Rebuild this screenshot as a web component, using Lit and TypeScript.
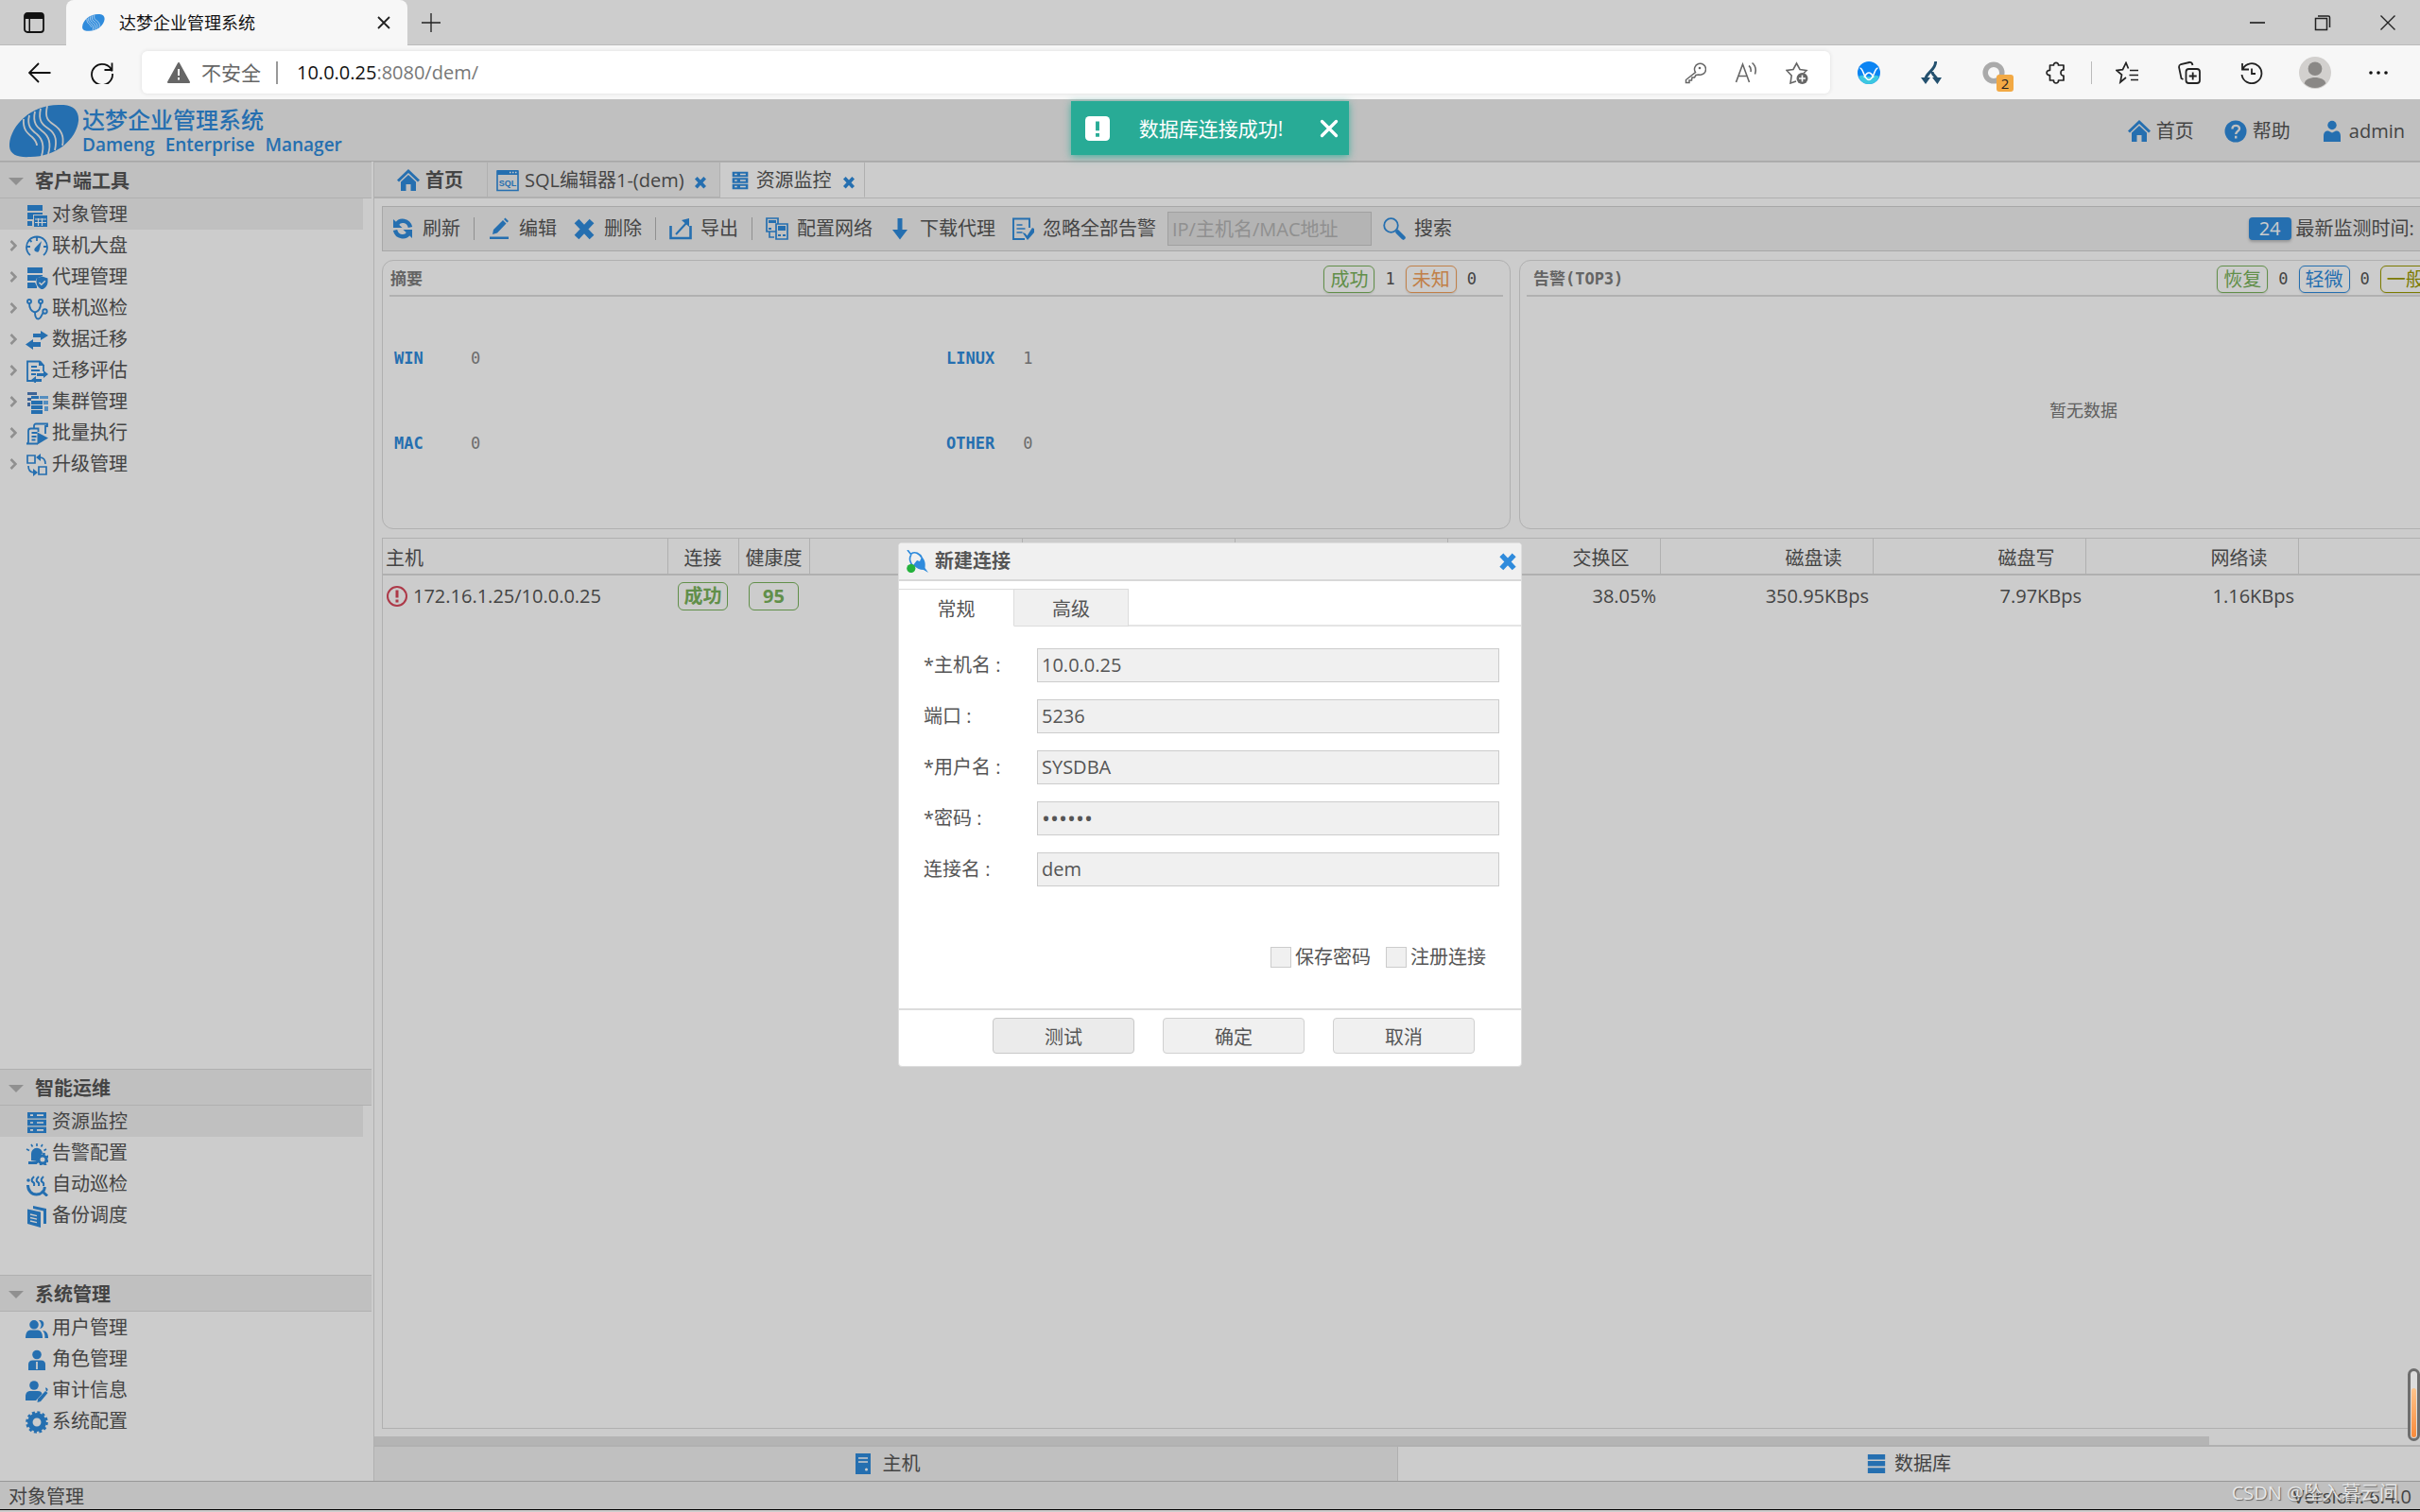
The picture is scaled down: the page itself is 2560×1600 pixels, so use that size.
import { LitElement, html, svg, css, nothing, SVGTemplateResult } from "lit";
import { customElement } from "lit/decorators.js";
import { classMap } from "lit/directives/class-map.js";

const B = "#2f8bdc";

const art: Record<string, SVGTemplateResult> = {
  object: svg`<path fill="${B}" d="M2 1h16v6H2zM2 9h16v2H8v5H2zM2 18h5v5H2z"/><path fill="${B}" d="M9 12h14v12H9z"/><path stroke="#fff" stroke-width="1.2" d="M10 16h12M10 19.500h12M13.500 15v8M17.500 15v8"/>`,
  gauge: svg`<path fill="none" stroke="${B}" stroke-width="1.800" d="M5 21A11 11 0 1 1 19 21M12 2v4M1.500 12h3.500M19 12h3.500M4.500 5l2 2"/><path fill="${B}" d="M17 6l-2.500 10a2.600 2.600 0 1 1-4.500-2.500z"/>`,
  agent: svg`<path fill="${B}" d="M2 1h16v6H2zM2 9h16v1l-7 3v2H2zM2 17h8l2 4v2H2z"/><path fill="${B}" d="M17.500 10.500l6 2v4c0 4-3 6.500-6 8-3-1.500-6-4-6-8v-4z"/><path fill="none" stroke="#fff" stroke-width="1.500" d="M14.500 17l2.300 2.300 4-4"/>`,
  steth: svg`<g fill="none" stroke="${B}" stroke-width="1.900"><circle cx="4" cy="4" r="2"/><circle cx="16" cy="4" r="2"/><circle cx="20.500" cy="14.500" r="2.200"/><path d="M4 6c0 5 2 8.500 6 9.500 4-1 6-4.500 6-9.500M10 15.500c0 4 1 7 3.500 7s3-3 5-6.500"/></g>`,
  migrate: svg`<path fill="${B}" d="M8 5h8V2l8 5-8 5V9H8zM16 14H8v-3l-8 5.500L8 22v-3h8z"/>`,
  evaluate: svg`<path fill="none" stroke="${B}" stroke-width="1.800" d="M8 22H2V1.500h13l4 4V12M6 7h6M6 11h9M6 15h5"/><path fill="${B}" d="M14 1h2l4 5h-6zM12 14h7v-3l5 4-5 4v-2h-7zM17 20h-6v-3l-5 4 5 4v-2h6z"/>`,
  cluster: svg`<path fill="#4d7dbd" d="M2 1h10v3H2zM2 7h4v3H2zM2 12h3v4H2z"/><path fill="#6bb2ef" d="M15 5h9v3h-9zM19 10h5v4h-5zM20 16h4v5h-4z"/><path fill="${B}" d="M6 5h8v3H6zM6 10h12v4H6zM6 15h12v4H6zM6 20h12v4H6z"/>`,
  batch: svg`<path fill="none" stroke="${B}" stroke-width="1.800" d="M9 6V3.500A2 2 0 0 1 11 1.500h12V4h-2v8M3 20V9a2.500 2.500 0 0 1 2.500-2.500h8V10M1 22.500h12M3 20c0 1.500-1 2.500-2 2.500M6.500 11h6M6.500 15h5M6.500 18.500h4"/><path fill="${B}" d="M12.500 10.500L24 16.500l-11.500 7z"/>`,
  upgrade: svg`<path fill="none" stroke="${B}" stroke-width="1.700" d="M2 2h8v8H2zM14 14h8v8h-8zM15 4c4 0 6 2 6 7M3 13c0 5 2 7 6 7"/><path fill="${B}" d="M16 0v8l-5-4zM8 16v8l5-4z"/>`,
  server: svg`<path fill="${B}" d="M2 1h20v6.500H2zM2 8.700h20v6.500H2zM2 16.500h20V23H2z"/><path stroke="#fff" stroke-width="1.700" d="M5 4.200h3M12 4.200h7M5 12h3M12 12h7M5 19.800h3M12 19.800h7"/>`,
  alarm: svg`<path fill="${B}" d="M6 19V12a6 6 0 0 1 12-.5L13 16v4zM3 20h9v3H3z"/><path stroke="${B}" stroke-width="1.600" d="M12 1v3M6 2l1.500 2.500M18 2l-1.500 2.500M1 7l3 1.500M22 7l-2.500 1.500"/><circle cx="18" cy="18" r="4" fill="none" stroke="${B}" stroke-width="3"/><path stroke="${B}" stroke-width="2.500" stroke-dasharray="2.500 2.200" d="M12 18a6 6 0 1 1 12 0 6 6 0 1 1-12 0" fill="none"/>`,
  patrol: svg`<path fill="none" stroke="${B}" stroke-width="2" d="M9 3c-3 3-3 5-1 6s1 3 1 4M14 3c-3 3-3 5-1 6s1 3 1 4M19 3c-3 3-3 5-1 6s1 3 1 4"/><path fill="none" stroke="${B}" stroke-width="3" d="M2.500 12c0 6 4 10 9 10 5.500 0 8.500-4 9-8M17 18l6 5.500"/><circle cx="3" cy="7" r="1.800" fill="${B}"/>`,
  backup: svg`<path fill="${B}" d="M8 1l14 3v16h-3V6.500L8 4zM2 4.500l14 3V24L2 20z"/><path stroke="#fff" stroke-width="1.300" d="M5 10l7 1.700M5 13.500l7 1.700M5 17l7 1.700"/>`,
  users: svg`<path fill="${B}" d="M9 3a4.800 4.800 0 1 1 0 9.600A4.800 4.800 0 0 1 9 3zM0 22c0-6 2-8.500 6-8.500h6c4 0 6 2.500 6 8.500zM14 3c7-1 7 8 1 9 2.500-3 2-6-1-9zM18 14c4 0 6 3 6 8h-3.500c0-4-.5-6-2.500-8z"/>`,
  role: svg`<circle cx="12" cy="6.500" r="4.800" fill="${B}"/><path fill="${B}" d="M3 23v-6c0-3 1.500-4.500 4.500-4.500h9c3 0 4.500 1.500 4.500 4.500v6z"/><path stroke="#fff" stroke-width="1.800" d="M12 14v8"/>`,
  audit: svg`<circle cx="9" cy="6" r="4.800" fill="${B}"/><path fill="${B}" d="M0 22v-4c0-4 2-6 5-6h8c3 0 4 1 4.500 3L11 22zM21 12l2.500 2L16 23l-3.500 1 .5-3.500zM21 8.500a2 2 0 1 1 1 4z"/>`,
  gear: svg`<circle cx="12" cy="12" r="7.200" fill="none" stroke="${B}" stroke-width="5.500"/><circle cx="12" cy="12" r="10.500" fill="none" stroke="${B}" stroke-width="2.600" stroke-dasharray="3 2.500"/>`,
  home: svg`<path fill="${B}" d="M12 0l12 11.500-2 2L12 4 2 13.500l-2-2zM12 6l8 7.500V23h-5.500v-7h-5v7H4v-9.500z"/>`,
  help: svg`<circle cx="12" cy="12" r="11.500" fill="${B}"/><path fill="none" stroke="#f0f0f0" stroke-width="2.400" d="M8.500 9.500c0-5 7.500-4.500 7.500-.5 0 2.800-3.800 3-3.800 6M12.200 16.800v2.600"/>`,
  user: svg`<circle cx="12" cy="5.500" r="4.700" fill="${B}"/><path fill="${B}" d="M3 23v-6c0-3.500 1.500-5.500 5-5.500l4 2 4-2c3.500 0 5 2 5 5.500v6z"/>`,
  sql: svg`<path fill="none" stroke="${B}" stroke-width="1.600" d="M1 2h22v20.500H1z"/><path fill="${B}" d="M1 1h22v5H1z"/><path stroke="#fff" stroke-width="1.400" stroke-dasharray="1.500 1.500" d="M14 3.500h8"/><text x="12" y="17.500" text-anchor="middle" font-family="Liberation Sans" font-weight="700" font-size="9" fill="${B}">SQL</text>`,
  refresh: svg`<path fill="none" stroke="${B}" stroke-width="4.500" d="M20 10.500C18 2.500 9 2 6 7M4 13.500c2 8 11 8.500 14 3.500"/><path fill="${B}" d="M2 2v9h9.500zM22 22v-9h-9.500z"/>`,
  edit: svg`<path fill="${B}" d="M2 20.500h20V23H2zM6 13L16 3l3.500 3.500-9.500 10L5 18zM17 2l1.500-1.500L22 4l-1.500 1.500z"/>`,
  remove: svg`<path stroke="${B}" stroke-width="6.500" d="M4 4l16 17M20 4L4 21"/>`,
  export: svg`<path fill="none" stroke="${B}" stroke-width="2.600" d="M1.500 9v13h21V9"/><path stroke="${B}" stroke-width="2" d="M7 18L19 5" /><path fill="${B}" d="M21 1v9l-8-7z"/>`,
  network: svg`<path fill="#f0f0f0" stroke="${B}" stroke-width="1.700" d="M1 1h12v14H1z"/><path fill="${B}" d="M3 3h8v3H3zM3 11h3v2H3z"/><path fill="#f0f0f0" stroke="${B}" stroke-width="1.700" d="M11 7h12v16H11z"/><path fill="${B}" d="M13 9h8v5h-8zM13 18h3v2h-3zM18 18h3v2h-3z"/><path fill="none" stroke="${B}" stroke-width="1.600" d="M4 15v6h5"/>`,
  down: svg`<path fill="${B}" d="M9.500 1h5v12h5.500L12 23.500 4 13h5.500z"/>`,
  ignore: svg`<path fill="none" stroke="${B}" stroke-width="1.900" d="M14 23H2V1.500h17V11"/><path fill="none" stroke="${B}" stroke-width="1.700" d="M5.500 8h6M5.500 12h9M5.500 16h6"/><path fill="${B}" d="M11.500 16l3 1 2 2.500L22 11l2 1v4l-7 8z"/>`,
  search: svg`<circle cx="8.500" cy="8.500" r="7.300" fill="none" stroke="${B}" stroke-width="1.800"/><path stroke="${B}" stroke-width="4.500" stroke-linecap="round" d="M15.500 15.500l6 6"/>`,
  smallx: svg`<path stroke="${B}" stroke-width="5.500" d="M5 5l14 15M19 5L5 20"/>`,
  warn: svg`<circle cx="12" cy="12" r="10" fill="none" stroke="#d9485b" stroke-width="2"/><path stroke="#d9485b" stroke-width="3" d="M12 5.500v8M12 15.500v3"/>`,
  host: svg`<path fill="${B}" d="M4 1h16v22H4z"/><path stroke="#fff" stroke-width="1.600" d="M7 6h10M7 10h10"/><circle cx="15.500" cy="18" r="1.500" fill="#fff"/>`,
  database: svg`<path fill="${B}" d="M1 0h22v6.500H1zM1 8.500h22v6.500H1zM1 17h22v7H1z"/>`,
  connect: svg`<path fill="none" stroke="${B}" stroke-width="1.700" d="M1 0l4 5M5 5c-3 4-1 9 2 12M5 4c4-3 9 0 11 4"/><path fill="${B}" d="M16 7c4 4 4 8 3.500 12l3.500 5-5-3c-4 0-8-2-11-5l4-5 3 1z"/><circle cx="4.800" cy="19.500" r="4.600" fill="#24b23c"/>`,
  // browser glyphs
  panes: svg`<rect x="2" y="2" width="20" height="20" rx="3" fill="none" stroke="#111" stroke-width="1.800"/><path fill="#111" d="M2 3h20v5H2zM6.500 8h1.500v14H6.500z"/>`,
  close: svg`<path stroke="#222" stroke-width="1.800" d="M6 6l12 12M18 6L6 18"/>`,
  plus: svg`<path stroke="#222" stroke-width="1.600" d="M12 0v24M0 12h24"/>`,
  back: svg`<path fill="none" stroke="#111" stroke-width="1.800" d="M23.500 12H1M11 2L1 12l10 10"/>`,
  reload: svg`<path fill="none" stroke="#111" stroke-width="1.800" d="M22.500 10.500A11 11 0 1 0 23 13M22.500 1.500v7.500h-8"/>`,
  tri: svg`<path fill="#666" stroke="#666" stroke-width="2" stroke-linejoin="round" d="M12 2L23 22H1z"/><path stroke="#fff" stroke-width="2" d="M12 8v7M12 17v2.500"/>`,
  min: svg`<path stroke="#111" stroke-width="1.500" d="M4 12h16"/>`,
  restore: svg`<path fill="none" stroke="#222" stroke-width="1.500" d="M4.500 7.500h12v12h-12zM7 5h11a1.500 1.500 0 0 1 1.500 1.500V17"/>`,
  winx: svg`<path stroke="#222" stroke-width="1.400" d="M4.500 4.500l15 15M19.500 4.500l-15 15"/>`,
  key: svg`<path fill="none" stroke="#666" stroke-width="1.500" d="M12.500 11.500A6 6 0 1 1 16 14l-3 .5-1.500 2.500H9l-.5 3H6v2.500H2.500v-3z"/><circle cx="17" cy="7" r="1.300" fill="#666"/>`,
  read: svg`<path fill="none" stroke="#666" stroke-width="1.600" d="M1.500 22L8.500 3l7 19M4 15.500h9M15 4.500c2 1.500 2.500 4 2 6.500M18.500 1.500c3.500 3 4.500 7.500 3 12"/>`,
  starplus: svg`<path fill="none" stroke="#666" stroke-width="1.600" d="M11 21l-6 2 1.200-8L1 9.500l7-1L11.500 2 15 8.500l7 1-3 3"/><circle cx="17.500" cy="18" r="6" fill="#666"/><path stroke="#fff" stroke-width="1.600" d="M17.500 14.500v7M14 18h7"/>`,
  vee: svg`<circle cx="12" cy="12" r="12" fill="#0b84f3"/><path fill="#3cc8e0" d="M1 16c5-3 8 0 11 0s6-3 11 0c-2 5-6 8-11 8S3 21 1 16z"/><path fill="none" stroke="#fff" stroke-width="1.600" d="M2.500 7c4 0 4 12.500 9.500 12.500S17.500 7 21.500 7M7 17c2-4 3-5 5-5s3 1 5 5"/>`,
  fork: svg`<path fill="none" stroke="#23506e" stroke-width="3" d="M16.500 0c1 9-11 12-11 20M13 11c0 4 5 5 5.500 9"/><path fill="#23506e" d="M1 17h10l-5 7zM13 17h10l-4.500 7z"/>`,
  ring: svg`<circle cx="12" cy="12" r="8.800" fill="none" stroke="#aaa" stroke-width="5.500"/>`,
  puzzle: svg`<path fill="none" stroke="#222" stroke-width="1.700" stroke-linejoin="round" d="M5.500 4h4C9 .500 15 .500 14.500 4H20v5c-4-.5-4 6.500 0 6v5h-5.500c.5 4-5.500 4-5 0h-4v-5.500c-4.500.5-4.500-5.500 0-5z"/>`,
  starlist: svg`<path fill="none" stroke="#222" stroke-width="1.700" d="M11 17l-6 5 1.500-8L1 9.500l6.500-.8L11 1.500l2.500 6M15 9.500h9M14.500 14.500H24M16 19.500h8"/>`,
  collect: svg`<rect x="8.500" y="8" width="14.500" height="15" rx="3" fill="none" stroke="#222" stroke-width="1.800"/><path fill="none" stroke="#222" stroke-width="1.800" d="M5.500 19L3.500 18 1 6c0-2 .5-2.500 2-3l9-2c2-.3 3 .5 3.500 3M15.700 11.500v8M11.700 15.500h8"/>`,
  history: svg`<path fill="none" stroke="#222" stroke-width="1.800" d="M2 2v6.500h7M2.500 8a10.500 10.500 0 1 1-1 6M12 7.500V13h4"/>`,
  avatar: svg`<circle cx="12" cy="12" r="12" fill="#d2d0ce"/><circle cx="12" cy="9" r="5.200" fill="#8a8886"/><path fill="#8a8886" d="M4 20c1-6 15-6 16 0-4 4.500-12 4.500-16 0z"/>`,
  dots: svg`<circle cx="4" cy="12" r="1.800" fill="#111"/><circle cx="12" cy="12" r="1.800" fill="#111"/><circle cx="20" cy="12" r="1.800" fill="#111"/>`,
  notice: svg`<rect width="24" height="24" rx="4" fill="#fff"/><path stroke="#28ab96" stroke-width="3.600" d="M12 5v9M12 16.500V20"/>`,
  cross: svg`<path stroke="#fff" stroke-width="4" stroke-linecap="round" d="M3 3l18 18M21 3L3 21"/>`,
};

const icon = (name: string, size = "") =>
  html`<svg class="ic ${size}" viewBox="0 0 24 24" aria-hidden="true">${art[name]}</svg>`;

const globe = (line: string) => html`<svg class="globe" viewBox="0 0 74 56" aria-hidden="true">
  <path fill=${B} d="M0 41C2 22 22 0 52 0c15-1 22 6 21 17-2 19-23 38-51 38C8 56-1 52 0 41z"/>
  <g fill="none" stroke=${line} stroke-width="1.8">
    <path d="M40 1c-3 13 1 16 7 20 9 6 11 13 9 22"/>
    <path d="M33 4c-3 13 2 17 8 21 9 6 9 14 7 23"/>
    <path d="M27 7c-3 13 3 17 8 21 8 6 9 14 6 24"/>
    <path d="M21 11c-3 12 3 16 8 20 7 6 8 13 5 23"/>
    <path d="M15 15c-1 11 4 15 9 19 4 4 5 6 5 9"/>
  </g></svg>`;

const base = css`
  :host {
    display: block;
    font: 400 20px/24px "Open Sans", "Noto Sans CJK SC", sans-serif;
    color: #555;
  }
  *, *::before, *::after { box-sizing: border-box; }
  button, input { font: inherit; color: inherit; margin: 0; }
  button { background: none; border: 0; padding: 0; white-space: nowrap; }
  a { color: inherit; text-decoration: none; }
  .ic { width: 24px; height: 24px; flex: none; display: block; }
  .ic.s16 { width: 16px; height: 16px; }
  .ic.s20 { width: 20px; height: 20px; }
  .ic.s26 { width: 26px; height: 26px; }
  .ic.s34 { width: 34px; height: 34px; }
`;

@customElement("browser-bar")
export class BrowserBar extends LitElement {
  static styles = [base, css`
    .strip { display: flex; align-items: center; height: 48px; background: #cdcdcd; padding: 0 22px 0 24px; box-shadow: inset 0 -1px #bbb; }
    .tab { display: flex; align-items: center; align-self: stretch; width: 361px; margin: 0 15px 0 22px; padding: 0 13px 0 17px; gap: 15px; background: #f7f7f7; border-radius: 8px 8px 0 0; color: #111; font-size: 18px; }
    .tab .globe { width: 24px; height: 18px; }
    .title { flex: 1; }
    .win { margin-left: auto; display: flex; gap: 45px; }
    .bar { display: flex; align-items: center; height: 57px; background: #f7f7f7; padding: 0 32px 0 30px; }
    .bar > button + button { margin-left: 42px; }
    .address { flex: 1; display: flex; align-items: center; height: 45px; margin: 0 29px 0 30px; padding: 0 23px 0 27px; background: #fff; border-radius: 6px; box-shadow: 0 0 4px #ddd; color: #666; }
    .unsafe { margin-left: 12px; font-size: 21px; }
    .rule { width: 2px; height: 24px; background: #999; margin: 0 20px 0 16px; }
    .url { flex: 1; color: #777; }
    .url b { color: #111; font-weight: 400; }
    .tools { display: flex; gap: 30px; }
    .ext { display: flex; align-items: center; gap: 42px; }
    .ext .rule { width: 1px; background: #bbb; margin: 0 -17px; }
    .badged { position: relative; }
    .badge { position: absolute; left: 15px; top: 14px; width: 18px; height: 18px; border-radius: 3px; background: #f2a944; color: #222; font-size: 15px; line-height: 18px; text-align: center; }
    .ext .s34 { margin: 0 -4px; }
  `];
  render() {
    const b = (n: string, label: string, size = "") => html`<button aria-label=${label}>${icon(n, size)}</button>`;
    return html`
      <div class="strip">
        ${b("panes", "标签页操作")}
        <div class="tab">${globe("#f7f7f7")}<span class="title">达梦企业管理系统</span>${b("close", "关闭标签页")}</div>
        ${b("plus", "新建标签页", "s20")}
        <div class="win">${b("min", "最小化")}${b("restore", "还原")}${b("winx", "关闭")}</div>
      </div>
      <div class="bar">
        ${b("back", "返回")}${b("reload", "刷新")}
        <div class="address">
          ${icon("tri")}<span class="unsafe">不安全</span><span class="rule"></span>
          <span class="url"><b>10.0.0.25</b>:8080/dem/</span>
          <div class="tools">${b("key", "密码")}${b("read", "朗读")}${b("starplus", "收藏此页")}</div>
        </div>
        <div class="ext">
          ${b("vee", "扩展一")}${b("fork", "扩展二")}
          <button class="badged" aria-label="扩展三">${icon("ring")}<span class="badge">2</span></button>
          ${b("puzzle", "扩展")}<span class="rule"></span>
          ${b("starlist", "收藏夹")}${b("collect", "集锦")}${b("history", "历史记录")}${b("avatar", "用户", "s34")}${b("dots", "更多")}
        </div>
      </div>`;
  }
}

interface Group { title: string; grow?: boolean; selected?: number; tree?: boolean; items: [string, string][]; }

const groups: Group[] = [
  { title: "客户端工具", grow: true, selected: 0, tree: true, items: [["object", "对象管理"], ["gauge", "联机大盘"], ["agent", "代理管理"], ["steth", "联机巡检"], ["migrate", "数据迁移"], ["evaluate", "迁移评估"], ["cluster", "集群管理"], ["batch", "批量执行"], ["upgrade", "升级管理"]] },
  { title: "智能运维", selected: 0, items: [["server", "资源监控"], ["alarm", "告警配置"], ["patrol", "自动巡检"], ["backup", "备份调度"]] },
  { title: "系统管理", items: [["users", "用户管理"], ["role", "角色管理"], ["audit", "审计信息"], ["gear", "系统配置"]] },
];

@customElement("side-nav")
export class SideNav extends LitElement {
  static styles = [base, css`
    :host { display: flex; flex-direction: column; background: #fff; padding-right: 2px; border-right: 1px solid #dcdcdc; }
    section { min-height: 218px; }
    .grow { flex: 1; }
    .head { display: flex; align-items: center; width: 100%; height: 39px; padding: 2px 0 0 9px; gap: 12px; background: #f0f0f0; border: solid #dcdcdc; border-width: 1px 0; font-weight: 700; }
    .head::before { content: ""; border: 8px solid transparent; border-top-color: #b4b4b4; border-bottom: 0; }
    .row { display: flex; align-items: center; height: 33px; margin-right: 9px; padding-left: 10px; }
    .sel { background: #f0f0f0; }
    .arrow { width: 17px; }
    .arrow svg { display: block; width: 8px; height: 12px; }
    .row .ic { margin-right: 4px; margin-top: 2px; }
  `];
  render() {
    return groups.map(g => html`<section class=${classMap({ grow: !!g.grow })}>
      <button class="head">${g.title}</button>
      ${g.items.map(([ic, label], i) => html`<a href="#" class=${classMap({ row: true, sel: g.selected === i })}>
        <span class="arrow">${g.tree && i > 0 ? html`<svg viewBox="0 0 8 12"><path fill="none" stroke="#b4b4b4" stroke-width="2.6" d="M1.500 1l5 5-5 5"/></svg>` : nothing}</span>
        ${icon(ic)}${label}</a>`)}
    </section>`);
  }
}

const pill = (text: string, tone: string) => html`<span class="pill ${tone}">${text}</span>`;

@customElement("monitor-page")
export class MonitorPage extends LitElement {
  static styles = [base, css`
    :host { display: flex; flex-direction: column; min-width: 0; overflow: hidden; background: #fff; }
    .tabs { display: flex; height: 39px; border-bottom: 1px solid #dcdcdc; box-shadow: inset 0 1px #dcdcdc; }
    .tab { display: flex; align-items: center; padding: 2px 12px 0 9px; background: #f0f0f0; border: solid #dcdcdc; border-width: 1px 1px 1px 0; gap: 6px; }
    .tab.first { width: 120px; padding-left: 24px; font-weight: 700; }
    .tab.on { background: #fff; border-bottom-color: #fff; padding: 2px 8px 0 11px; gap: 7px; }
    .tab .s16 { margin: 3px 0 0 3px; }
    .content { flex: 1; display: flex; flex-direction: column; width: 111.5%; padding: 8px; gap: 9px; }
    .toolbar { display: flex; align-items: center; gap: 17px; height: 48px; padding: 0 246px 0 9px; background: #f0f0f0; border: 1px solid #d2d2d2; }
    .tool { display: flex; align-items: center; gap: 9px; }
    .sep { width: 1px; height: 24px; margin: 0 -3px; background: #b4b4b4; }
    .find { width: 216px; height: 36px; padding: 0 4px; margin: 0 -5px; background: #e1e1e1; border: 1px solid #c8c8c8; }
    .find::placeholder { color: #b4b4b4; opacity: 1; }
    .time { display: flex; align-items: center; gap: 5px; margin-left: auto; white-space: nowrap; }
    .count { width: 45px; height: 24px; border-radius: 4px; background: #2f8bdc; color: #fff; text-align: center; box-shadow: 0 2px 3px #bbb; }
    .cards { display: grid; grid-template-columns: 1fr 1fr; gap: 9px; }
    .card { display: flex; flex-direction: column; height: 285px; padding: 2px 7px; border: 1px solid #dcdcdc; border-radius: 12px; }
    .head { display: flex; align-items: center; height: 36px; padding: 0 28px 0 1px; border-bottom: 2px solid #dcdcdc; gap: 11px; }
    .alerts .head { padding: 0 221px 0 7px; }
    h2 { margin: 0 auto 0 0; font: 700 17px/24px "DejaVu Sans Mono", "Noto Sans CJK SC", monospace; color: #7d7d7d; }
    .num { font: 400 17px/24px "DejaVu Sans Mono", monospace; }
    .pill { display: inline-block; height: 29px; width: 54px; border: 1px solid; border-radius: 6px; text-align: center; line-height: 27px; box-shadow: 0 1px 2px #ddd; }
    .green { color: #7ab35c; } .orange { color: #f2a05a; } .blue { color: #2f8bdc; } .olive { color: #9c9a00; }
    .stats { flex: 1; display: grid; grid-template-columns: 584px 1fr; grid-auto-rows: 90px; align-content: center; align-items: center; padding: 0 0 23px 5px; }
    .stat { display: flex; gap: 30px; font: 400 17px/24px "DejaVu Sans Mono", monospace; color: #888; }
    .stat b { color: #2f8bdc; min-width: 51px; }
    .empty { flex: 1; display: grid; place-items: center; padding-bottom: 5px; font: 400 18px/24px "Noto Sans CJK SC", sans-serif; color: #777; }
    .grid { flex: 1; border: 1px solid #dcdcdc; }
    table { width: 100%; table-layout: fixed; border-collapse: collapse; }
    col.host { width: 301px; } col.state { width: 75px; } col.metric { width: 225px; }
    th { height: 38px; padding: 5px 32px 0 3px; text-align: right; font-weight: 400; border-right: 1px solid #dcdcdc; border-bottom: 2px solid #dcdcdc; }
    td { height: 44px; padding: 0 4px 0 3px; text-align: right; }
    th.l, td.l { text-align: left; }
    th.c, td.c { text-align: center; padding-left: 0; padding-right: 0; }
    .name { display: flex; align-items: center; gap: 5px; }
    td .pill { font-weight: 700; width: 53px; height: 30px; line-height: 28px; box-shadow: none; vertical-align: middle; }
    .scroll, .thumb { height: 9px; }
    .thumb { background: #e1e1e1; }
    .views { display: grid; grid-template-columns: 1fr 1fr; height: 38px; border-top: 2px solid #dcdcdc; }
    .view { display: flex; align-items: center; justify-content: center; gap: 9px; background: #fff; border-left: 1px solid #dcdcdc; }
    .view.on { background: #f0f0f0; border-left: 0; }
  `];
  render() {
    const tool = (ic: string, label: string) => html`<button class="tool">${icon(ic)}${label}</button>`;
    const sep = html`<span class="sep"></span>`;
    const stats: [string, number][] = [["WIN", 0], ["LINUX", 1], ["MAC", 0], ["OTHER", 0]];
    return html`
      <div class="tabs">
        <button class="tab first">${icon("home")}首页</button>
        <button class="tab">${icon("sql")}SQL编辑器1-(dem)${icon("smallx", "s16")}</button>
        <button class="tab on">${icon("server", "s20")}资源监控${icon("smallx", "s16")}</button>
      </div>
      <div class="content">
        <div class="toolbar">
          ${tool("refresh", "刷新")}${sep}${tool("edit", "编辑")}${tool("remove", "删除")}${sep}${tool("export", "导出")}${sep}
          ${tool("network", "配置网络")}${tool("down", "下载代理")}${tool("ignore", "忽略全部告警")}
          <input class="find" type="text" aria-label="IP/主机名/MAC地址" placeholder="IP/主机名/MAC地址">
          ${tool("search", "搜索")}
          <span class="time"><span class="count">24</span>最新监测时间:</span>
        </div>
        <div class="cards">
          <div class="card">
            <div class="head"><h2>摘要</h2>${pill("成功", "green")}<span class="num">1</span>${pill("未知", "orange")}<span class="num">0</span></div>
            <div class="stats">${stats.map(([k, v]) => html`<div class="stat"><b>${k}</b><span>${v}</span></div>`)}</div>
          </div>
          <div class="card alerts">
            <div class="head"><h2>告警(TOP3)</h2>${pill("恢复", "green")}<span class="num">0</span>${pill("轻微", "blue")}<span class="num">0</span>${pill("一般", "olive")}</div>
            <div class="empty">暂无数据</div>
          </div>
        </div>
        <div class="grid">
          <table>
            <colgroup><col class="host"><col class="state"><col class="state">${[1, 2, 3, 4, 5, 6, 7].map(() => html`<col class="metric">`)}<col></colgroup>
            <thead><tr><th class="l">主机</th><th class="c">连接</th><th class="c">健康度</th><th></th><th></th><th></th><th>交换区</th><th>磁盘读</th><th>磁盘写</th><th>网络读</th><th></th></tr></thead>
            <tbody><tr><td class="l"><span class="name">${icon("warn")}172.16.1.25/10.0.0.25</span></td><td class="c">${pill("成功", "green")}</td><td class="c">${pill("95", "green")}</td><td></td><td></td><td></td><td>38.05%</td><td>350.95KBps</td><td>7.97KBps</td><td>1.16KBps</td><td></td></tr></tbody>
          </table>
        </div>
      </div>
      <div class="scroll"><div class="thumb" style="width:${100 / 1.115}%"></div></div>
      <div class="views">
        <button class="view on">${icon("host")}主机</button>
        <button class="view">${icon("database", "s20")}数据库</button>
      </div>`;
  }
}

@customElement("connection-dialog")
export class ConnectionDialog extends LitElement {
  static styles = [base, css`
    .box { width: 660px; height: 555px; display: flex; flex-direction: column; background: #fff; border: 1px solid #ddd; border-radius: 4px; overflow: hidden; }
    .title { display: flex; align-items: center; gap: 6px; height: 40px; padding: 0 4px 0 8px; background: #f0f0f0; border-bottom: 2px solid #d8d8d8; font-weight: 700; }
    .title button { margin-left: auto; }
    .tabs { display: flex; margin-top: 8px; height: 40px; box-shadow: inset 0 -2px #e4e4e4; }
    .tab { width: 121px; padding-top: 5px; background: #f0f0f0; border: 1px solid #dcdcdc; border-left: 0; }
    .tab.on { width: 122px; background: #fff; border-bottom-color: #fff; }
    .form { flex: 1; display: grid; grid-template-columns: 120px 1fr; grid-auto-rows: 36px; row-gap: 18px; align-items: center; padding: 23px 23px 0 26px; }
    .form input { height: 36px; width: 100%; padding: 0 4px; background: #f0f0f0; border: 1px solid #ccc; }
    .form input[type="password"] { font-size: 24px; }
    .checks { display: flex; justify-content: flex-end; gap: 16px; padding: 0 37px 42px 0; }
    .checks label { display: flex; align-items: center; gap: 4px; }
    .checks input { appearance: none; width: 22px; height: 22px; background: #f0f0f0; border: 1px solid #ccc; }
    .foot { display: flex; gap: 30px; height: 61px; padding: 8px 0 0 99px; border-top: 2px solid #dcdcdc; }
    .foot button { width: 150px; height: 38px; padding-top: 4px; background: #f0f0f0; border: 1px solid #d0d0d0; border-radius: 4px; }
    .foot .hot { background: #ebebeb; border-color: #c8c8c8; }
  `];
  render() {
    const field = (id: string, label: string, value: string, type = "text") =>
      html`<label for=${id}>${label}</label><input id=${id} type=${type} .value=${value}>`;
    return html`<div class="box" role="dialog" aria-label="新建连接">
      <div class="title">${icon("connect")}新建连接<button aria-label="关闭">${icon("remove", "s20")}</button></div>
      <div class="tabs"><button class="tab on">常规</button><button class="tab">高级</button></div>
      <div class="form">
        ${field("host", "*主机名 :", "10.0.0.25")}${field("port", "端口 :", "5236")}${field("user", "*用户名 :", "SYSDBA")}${field("pass", "*密码 :", "SYSDBA", "password")}${field("name", "连接名 :", "dem")}
      </div>
      <div class="checks"><label><input type="checkbox">保存密码</label><label><input type="checkbox">注册连接</label></div>
      <div class="foot"><button class="hot">测试</button><button>确定</button><button>取消</button></div>
    </div>`;
  }
}

@customElement("app-root")
export class AppRoot extends LitElement {
  static styles = [base, css`
    :host { display: flex; flex-direction: column; min-height: 100vh; background: #ccc; }
    .page { position: relative; flex: 1; display: flex; flex-direction: column; margin-bottom: 2px; border-bottom: 1px solid #000; }
    header { display: flex; align-items: center; height: 66px; padding: 2px 16px 0 10px; background: #f0f0f0; border-bottom: 1px solid #d2d2d2; }
    .globe { width: 74px; height: 56px; margin-right: 3px; }
    .brand { color: #2f8bdc; font-weight: 500; font-size: 24px; line-height: 28px; }
    .en { display: flex; gap: 11px; font-weight: 600; font-size: 19px; line-height: 24px; }
    .links { display: flex; gap: 32px; margin-left: auto; }
    .links a { display: flex; align-items: center; gap: 6px; }
    .body { flex: 1; display: grid; grid-template-columns: 396px 1fr; }
    footer { display: flex; align-items: center; justify-content: space-between; height: 30px; padding: 2px 9px 0; background: #f0f0f0; border-top: 1px solid #bebebe; }
    .veil { position: absolute; inset: 0; display: grid; place-items: center; background: rgba(0, 0, 0, 0.2); }
    .toast { position: absolute; top: 2px; left: 50%; transform: translateX(-50%); display: flex; align-items: center; height: 57px; width: 294px; padding: 0 11px 0 15px; background: #28ab96; color: #fff; font-size: 21px; box-shadow: 0 2px 8px rgba(40, 171, 150, 0.8); }
    .toast span { flex: 1; text-align: center; padding-right: 8px; }
    .pill { position: absolute; right: 0; bottom: 72px; width: 13px; height: 77px; padding: 18px 1px 1px; border: 3px solid #6e6e6e; border-radius: 7px; background: #ddd; }
    .level { height: 100%; border-radius: 3px; background: linear-gradient(#fdc48c, #f98a3a); }
    .mark { position: absolute; right: 23px; bottom: 5px; font-size: 20px; color: #eee; opacity: 0.85; text-shadow: 1px 1px 1px #555; }
  `];
  render() {
    return html`
      <browser-bar></browser-bar>
      <div class="page">
        <header>
          ${globe("#f0f0f0")}
          <div class="brand">达梦企业管理系统<div class="en"><span>Dameng</span><span>Enterprise</span><span>Manager</span></div></div>
          <nav class="links"><a href="#">${icon("home")}首页</a><a href="#">${icon("help")}帮助</a><a href="#">${icon("user")}admin</a></nav>
        </header>
        <div class="body"><side-nav></side-nav><monitor-page></monitor-page></div>
        <footer><span>对象管理</span><span>Version: 6.4.0</span></footer>
        <div class="veil"><connection-dialog></connection-dialog></div>
        <div class="toast" role="status">${icon("notice", "s26")}<span>数据库连接成功!</span><button aria-label="关闭提示">${icon("cross", "s20")}</button></div>
        <div class="pill"><div class="level"></div></div>
        <div class="mark">CSDN @坠入暮云间</div>
      </div>`;
  }
}
